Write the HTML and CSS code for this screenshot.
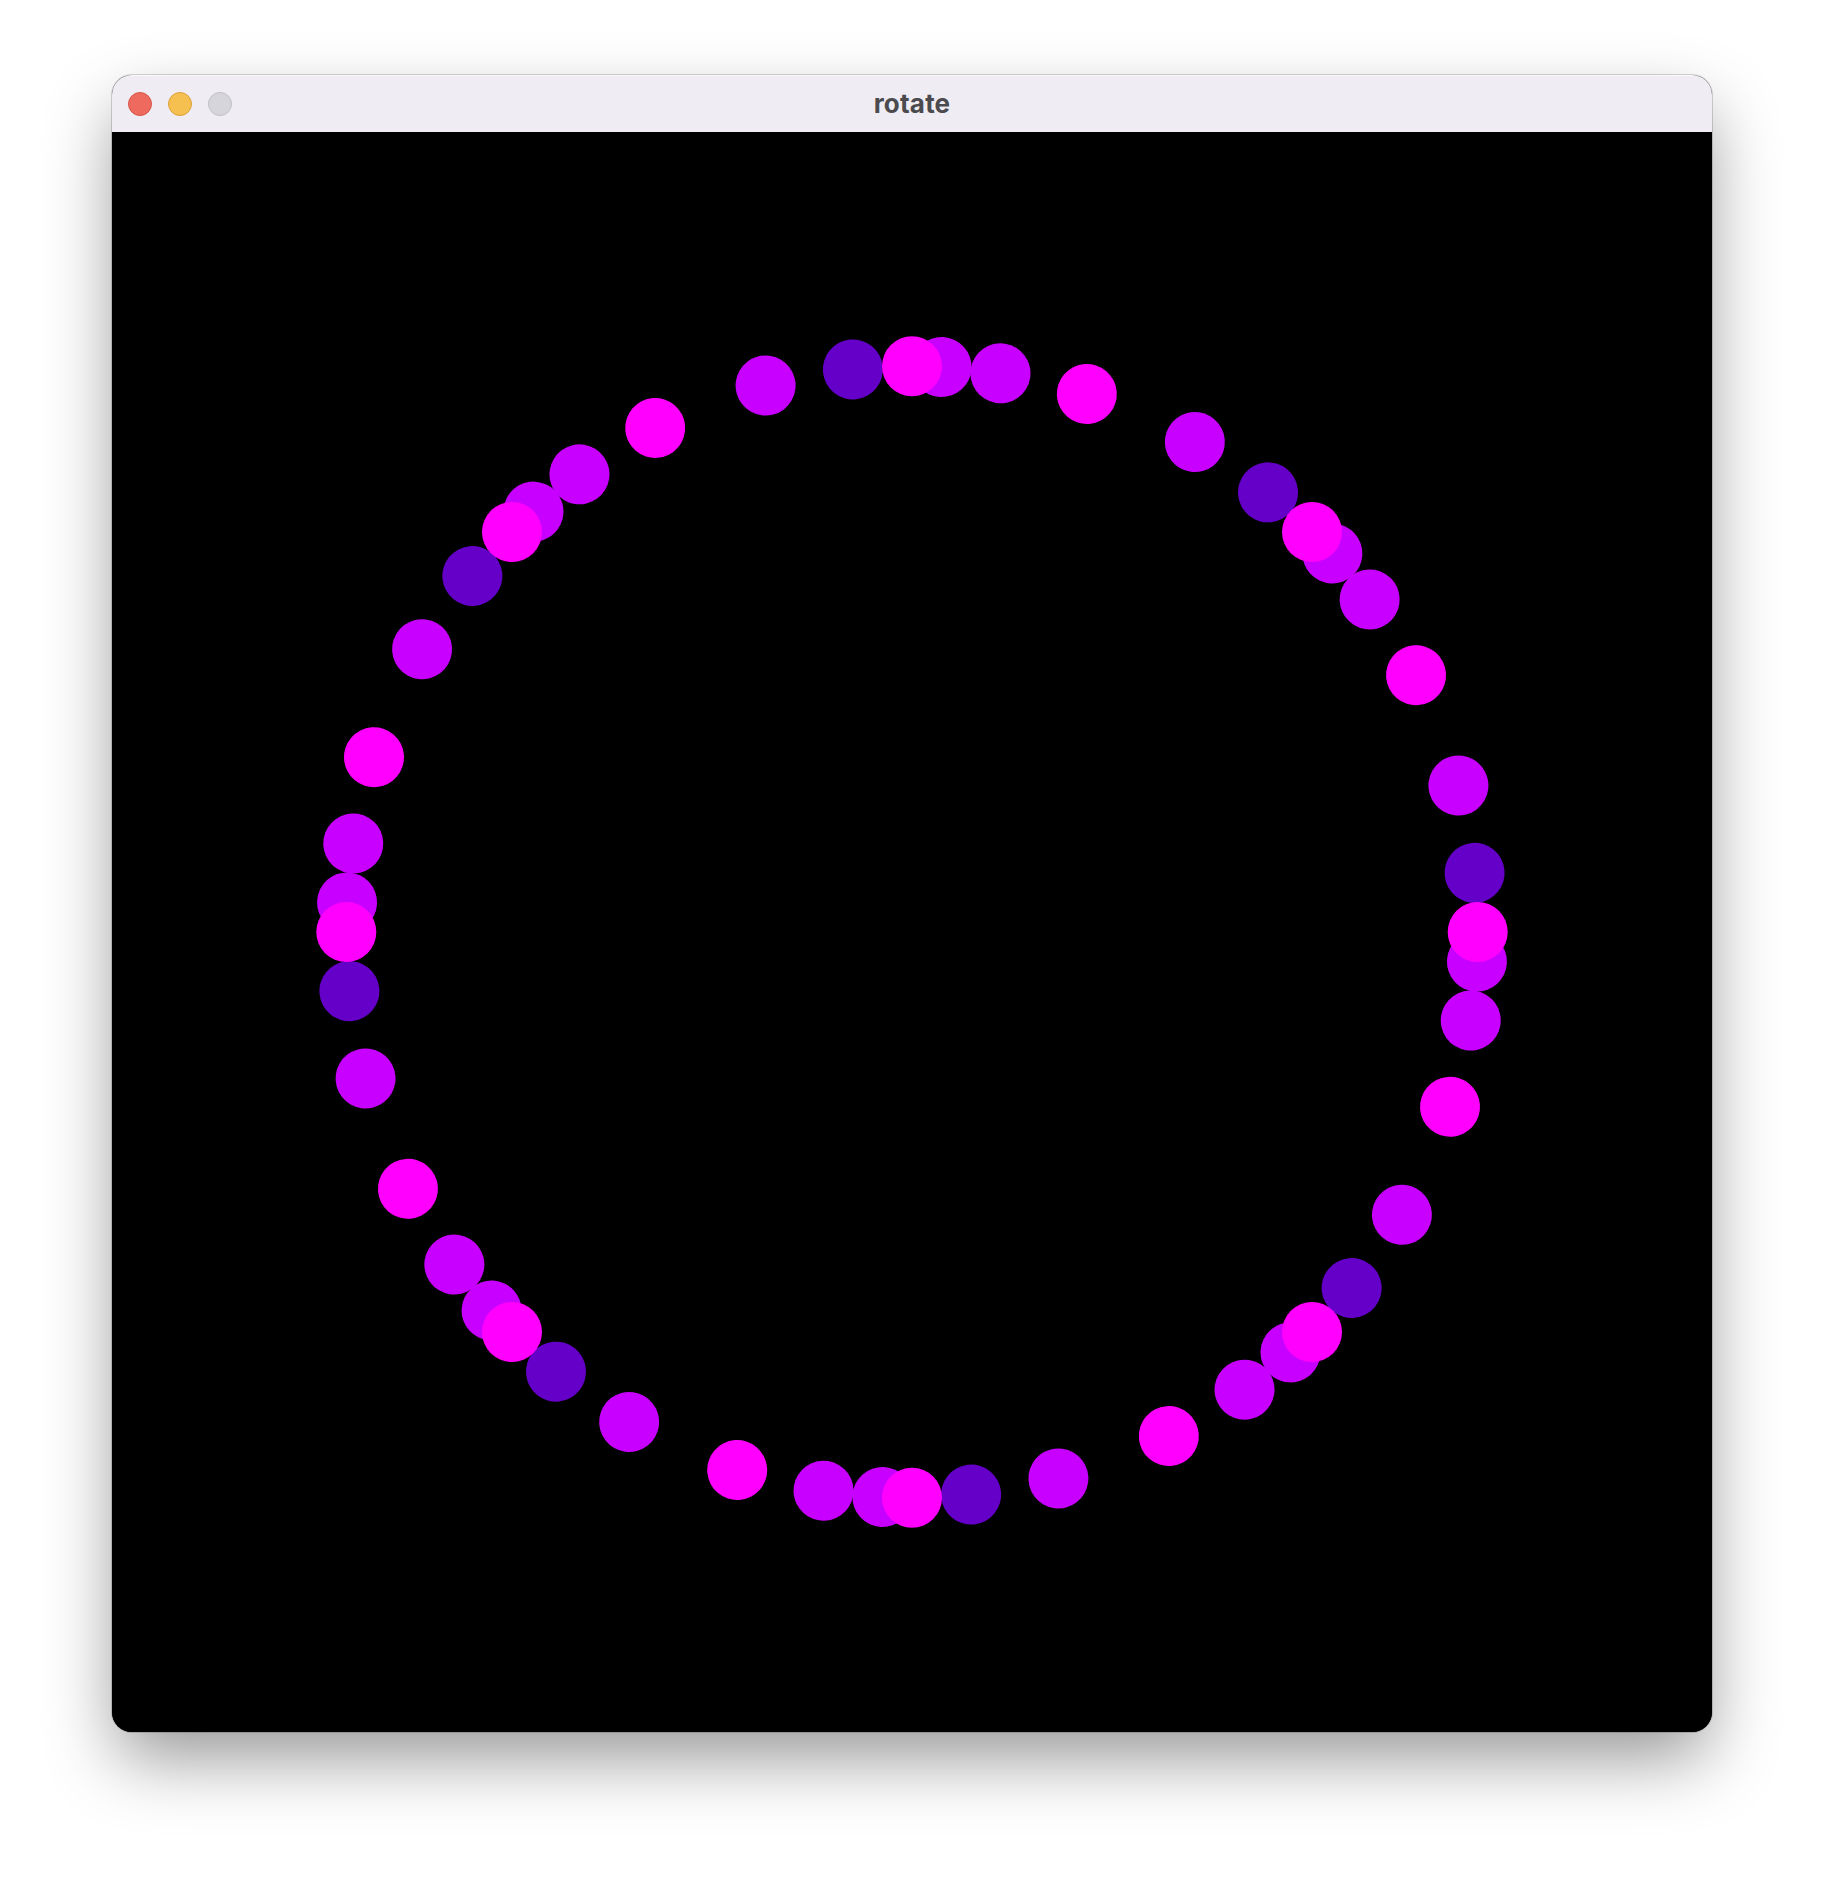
FILE: index.html
```html
<!DOCTYPE html>
<html lang="en">
<head>
<meta charset="utf-8">
<title>rotate</title>
<link rel="stylesheet" href="styles.css">
</head>
<body>
<div class="window">
  <div class="titlebar">
    <div class="lights">
      <span class="light close"></span>
      <span class="light minimize"></span>
      <span class="light zoom"></span>
    </div>
    <div class="title">rotate</div>
  </div>
  <div class="canvas">
    <span class="dot purple" style="--a:3deg"></span>
    <span class="dot purple" style="--a:9deg"></span>
    <span class="dot purple" style="--a:30deg"></span>
    <span class="dot purple" style="--a:48deg"></span>
    <span class="dot purple" style="--a:54deg"></span>
    <span class="dot purple" style="--a:75deg"></span>
    <span class="dot purple" style="--a:93deg"></span>
    <span class="dot purple" style="--a:99deg"></span>
    <span class="dot purple" style="--a:120deg"></span>
    <span class="dot purple" style="--a:138deg"></span>
    <span class="dot purple" style="--a:144deg"></span>
    <span class="dot purple" style="--a:165deg"></span>
    <span class="dot purple" style="--a:183deg"></span>
    <span class="dot purple" style="--a:189deg"></span>
    <span class="dot purple" style="--a:210deg"></span>
    <span class="dot purple" style="--a:228deg"></span>
    <span class="dot purple" style="--a:234deg"></span>
    <span class="dot purple" style="--a:255deg"></span>
    <span class="dot purple" style="--a:273deg"></span>
    <span class="dot purple" style="--a:279deg"></span>
    <span class="dot purple" style="--a:300deg"></span>
    <span class="dot purple" style="--a:318deg"></span>
    <span class="dot purple" style="--a:324deg"></span>
    <span class="dot purple" style="--a:345deg"></span>
    <span class="dot dark" style="--a:39deg"></span>
    <span class="dot dark" style="--a:84deg"></span>
    <span class="dot dark" style="--a:129deg"></span>
    <span class="dot dark" style="--a:174deg"></span>
    <span class="dot dark" style="--a:219deg"></span>
    <span class="dot dark" style="--a:264deg"></span>
    <span class="dot dark" style="--a:309deg"></span>
    <span class="dot dark" style="--a:354deg"></span>
    <span class="dot magenta" style="--a:0deg"></span>
    <span class="dot magenta" style="--a:18deg"></span>
    <span class="dot magenta" style="--a:45deg"></span>
    <span class="dot magenta" style="--a:63deg"></span>
    <span class="dot magenta" style="--a:90deg"></span>
    <span class="dot magenta" style="--a:108deg"></span>
    <span class="dot magenta" style="--a:135deg"></span>
    <span class="dot magenta" style="--a:153deg"></span>
    <span class="dot magenta" style="--a:180deg"></span>
    <span class="dot magenta" style="--a:198deg"></span>
    <span class="dot magenta" style="--a:225deg"></span>
    <span class="dot magenta" style="--a:243deg"></span>
    <span class="dot magenta" style="--a:270deg"></span>
    <span class="dot magenta" style="--a:288deg"></span>
    <span class="dot magenta" style="--a:315deg"></span>
    <span class="dot magenta" style="--a:333deg"></span>
  </div>
</div>
</body>
</html>
```

FILE: styles.css
```css
html, body {
  margin: 0;
  padding: 0;
  background: #ffffff;
}

body {
  padding-top: 75px;
  padding-left: 112px;
  height: 1880px;
  box-sizing: border-box;
  overflow: hidden;
}

.window {
  width: 1600px;
  border-radius: 20px;
  overflow: hidden;
  background: #000;
  box-shadow: 0 0 0 1px rgba(0, 0, 0, 0.16), 0 30px 70px -5px rgba(0, 0, 0, 0.42);
}

.titlebar {
  position: relative;
  height: 57px;
  background: #efedf3;
  display: flex;
  align-items: center;
  justify-content: center;
  box-shadow: inset 0 1px 0 rgba(255, 255, 255, 0.6);
}

.lights {
  position: absolute;
  left: 16px;
  top: 0;
  bottom: 0;
  display: flex;
  align-items: center;
  gap: 16px;
}

.light {
  display: block;
  width: 24px;
  height: 24px;
  border-radius: 50%;
  box-sizing: border-box;
}

.close {
  background: #ee6a5f;
  border: 1px solid #d6564b;
}

.minimize {
  background: #f5c04f;
  border: 1px solid #d9a13a;
}

.zoom {
  background: #d7d5dc;
  border: 1px solid #c0bec5;
}

.title {
  font-family: Inter, "Liberation Sans", sans-serif;
  font-weight: 700;
  font-size: 26px;
  color: #4b4a4e;
  letter-spacing: 0.2px;
}

.canvas {
  position: relative;
  width: 1600px;
  height: 1600px;
  background: #000;
  overflow: hidden;
}

.dot {
  position: absolute;
  left: 770px;
  top: 770px;
  width: 60px;
  height: 60px;
  border-radius: 50%;
  transform: rotate(var(--a)) translateY(-565.7px);
}

.purple {
  background: #c800ff;
}

.dark {
  background: #6400c8;
}

.magenta {
  background: #ff00ff;
}
```
